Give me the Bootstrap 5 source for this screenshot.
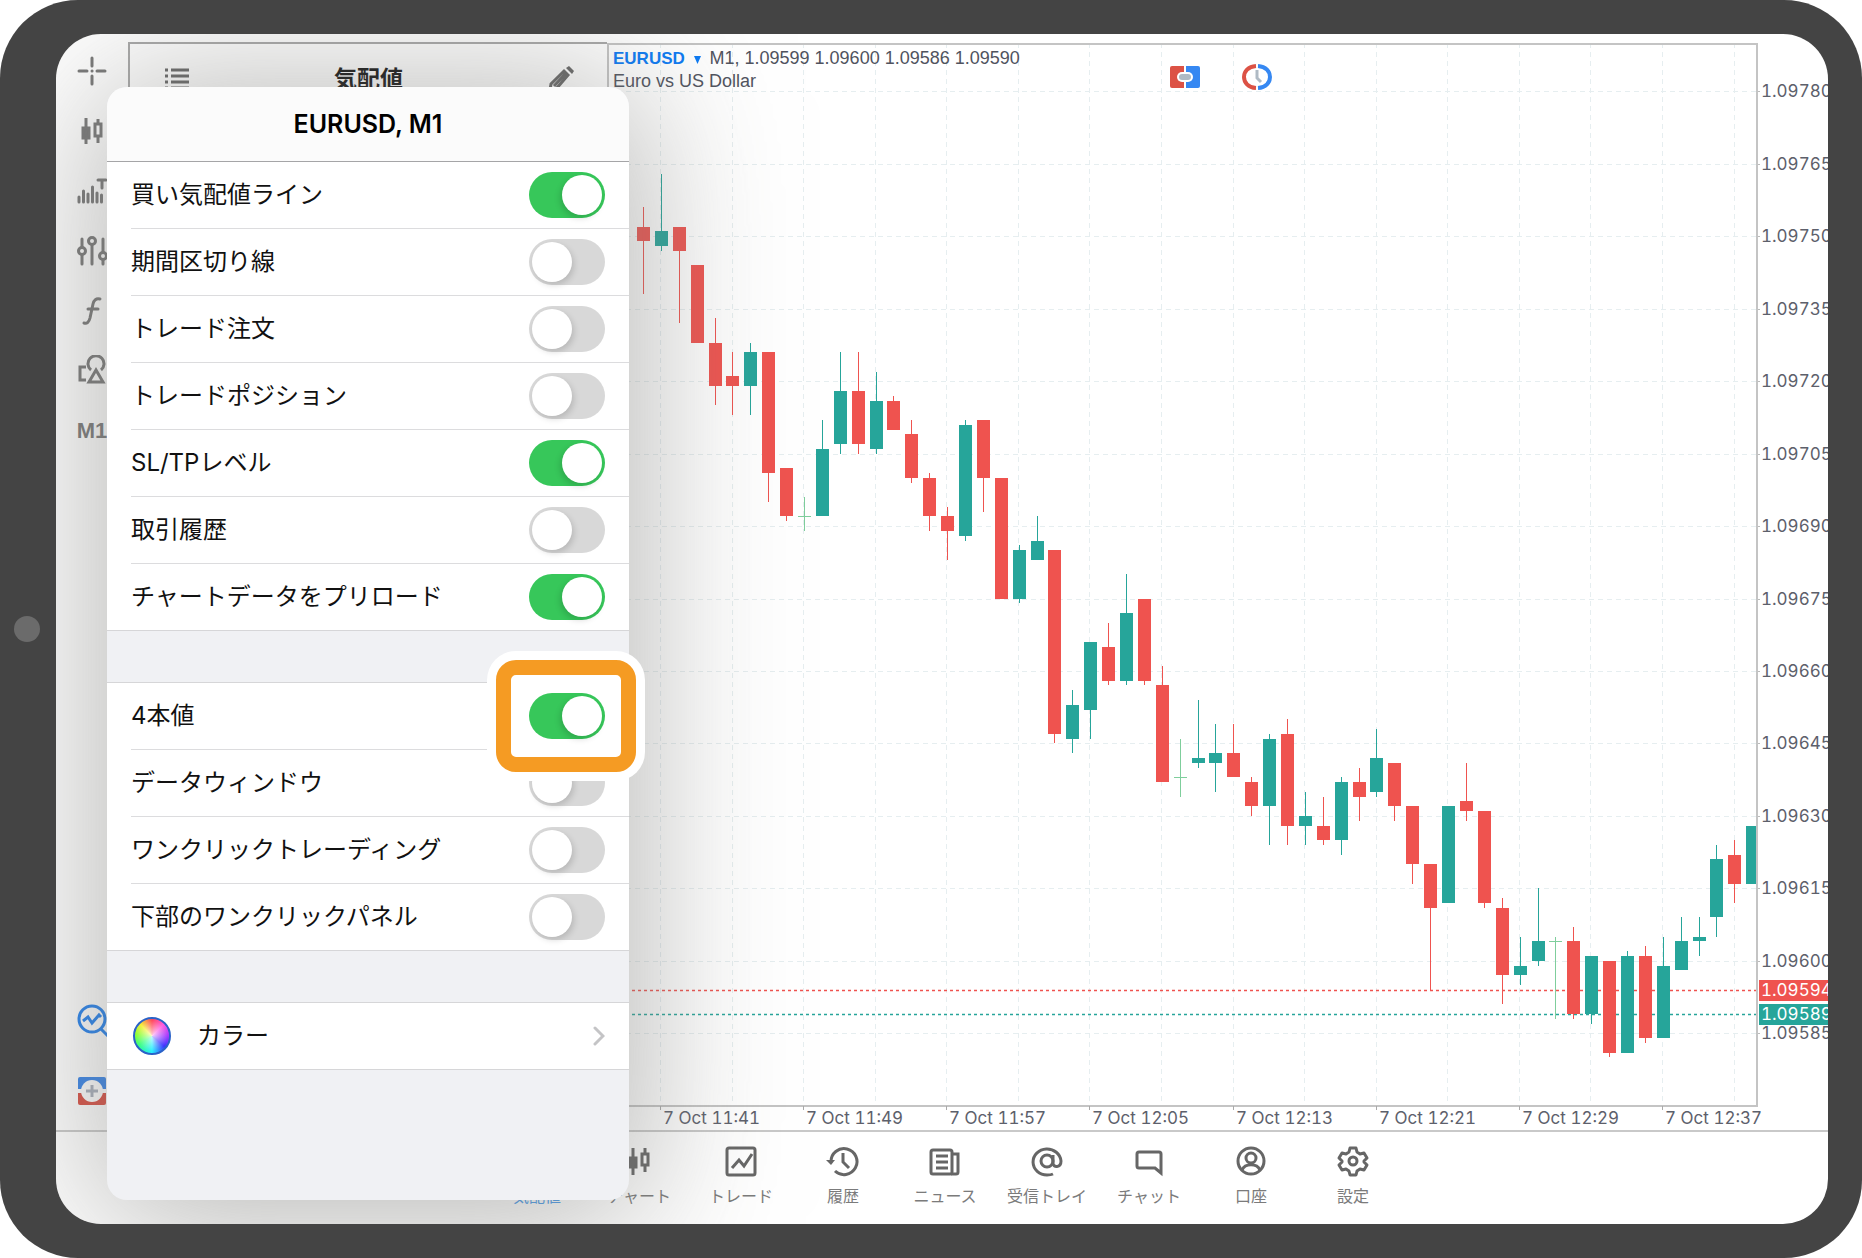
<!DOCTYPE html>
<html lang="ja">
<head>
<meta charset="utf-8">
<meta name="viewport" content="width=device-width, initial-scale=1">
<title>EURUSD, M1</title>
<link href="https://cdn.jsdelivr.net/npm/bootstrap@5.3.0/dist/css/bootstrap.min.css" rel="stylesheet">
<style>
  body { background: #fff; font-family: Inter, "Noto Sans CJK JP", sans-serif; color: #000; }
  .device { height: 100vh; min-height: 1100px; background: #444; border-radius: 78px; padding: 34px 34px 34px 0; }
  .bezel { width: 56px; padding-right: 2px; }
  .lens { width: 26px; height: 26px; border-radius: 50%; background: #6b6b6b; }
  .screen { border-radius: 45px; background: #fff; min-width: 0; }
  .upper { min-height: 0; }
  svg { display: block; }
  .ico { fill: none; stroke: #666; stroke-width: 3; }

  .tools { width: 72px; padding: 7px 0 4px; }
  .tool { height: 60px; border: 0; background: none; padding: 0; display: flex; align-items: center; justify-content: center; color: #666; }
  .tools .ico { stroke: #777; }
  .tool-low { height: 71px; }
  .tool-period { font: bold 22px/30px "Liberation Sans", sans-serif; color: #777; }

  .quotes { width: 479px; margin-top: 8px; border: solid #a8a8a8; border-width: 2px 0 0 2px; }
  .quotes-head { height: 70px; padding: 0 32px 0 34px; }
  .quotes-head h2 { font-size: 23px; line-height: 32px; font-weight: 700; margin: 0; color: #111; }
  .plain { border: 0; background: none; padding: 0; }

  .chart-area { min-width: 0; }
  .chart-area > svg { width: 100%; height: 100%; }
  .chart-label { left: 6px; top: 13px; font: 18px/23px "Liberation Sans", sans-serif; color: #50535e; }
  .symbol { color: #0a7af5; font: bold 17px/23px "Liberation Sans", sans-serif; }
  .chart-tools { left: 563px; top: 30px; gap: 42px; }
  .axis-text { font: 17px Inter, sans-serif; font-variant-numeric: tabular-nums; fill: #5d606b; }
  .axis-flag { fill: #fff; }

  .tabs { height: 94px; border-top: 2px solid #c9c9c9; padding: 12px 0 0 6px; }
  .tab-link { width: 102px; color: #7b7b7b; text-decoration: none; font-size: 16px; line-height: 24px; white-space: nowrap; }
  .tab-link .ico { margin-bottom: 6px; }
  .tab-link.current { color: #4b9bea; }
  .tab-link.current .ico { stroke: #4b9bea; }

  .sheet { left: 51px; top: 53px; bottom: 24px; width: 522px; border-radius: 20px; background: #f0f1f4; box-shadow: 0 10px 150px 12px rgba(125,125,122,.56); z-index: 5; }
  .sheet-head { height: 75px; border-bottom: 1px solid #a5a5a7; border-radius: 20px 20px 0 0; background: #fbfbfb; }
  .sheet-head h1 { font-size: 25px; line-height: 32px; font-weight: 600; margin: 0; }
  .group { background: #fff; border-bottom: 1px solid #d6d6d8; }
  .group + .group { margin-top: 51px; border-top: 1px solid #d6d6d8; }
  .item { height: 67px; margin-left: 24px; padding-right: 24px; border-bottom: 1px solid #dcdcde; font-size: 24px; line-height: 34px; color: #111; }
  .item:last-child { height: 66px; border-bottom: 0; }
  .item label { flex: 1; }
  .switch { appearance: none; width: 76px; height: 46px; border-radius: 23px; background: #d8d8d8; margin: 0; padding: 3px; position: relative; }
  .switch::before { content: ""; display: block; width: 40px; height: 40px; border-radius: 50%; background: #fff; box-shadow: 2px 3px 6px rgba(0,0,0,.15); }
  .switch:checked { background: #37c75a; }
  .switch:checked::before { margin-left: 30px; box-shadow: -2px 3px 6px rgba(0,0,0,.15); }
  .spot { position: relative; }
  .spot::before { content: ""; position: absolute; inset: -33px -31px -33px -33px; border: 15px solid #f59b23; border-radius: 20px; background: #fff; box-shadow: 0 0 0 9px #fff; z-index: 2; }
  .spot .switch { z-index: 3; display: block; }
  .wheel { width: 38px; height: 38px; border-radius: 50%; border: 2px solid #2a62c8; margin-right: 26px; margin-left: 2px;
    background: radial-gradient(circle, rgba(255,255,255,.75), rgba(255,255,255,0) 65%), conic-gradient(#ff4a5c, #ff5ce0 45deg, #a43cff 90deg, #3a36ff 130deg, #28f0ff 180deg, #38ff80 235deg, #8dff38 275deg, #f5f03a 315deg, #ff4a5c 360deg); }
  .item a { color: inherit; text-decoration: none; }
</style>
<script src="https://cdn.jsdelivr.net/npm/bootstrap@5.3.0/dist/js/bootstrap.bundle.min.js"></script>
</head>
<body>
<div class="device d-flex">
  <div class="bezel d-flex align-items-center justify-content-center flex-shrink-0"><span class="lens"></span></div>

  <div class="screen position-relative overflow-hidden flex-grow-1 d-flex flex-column">
    <main class="upper d-flex flex-grow-1">
      <div class="tools d-flex flex-column flex-shrink-0">
        <button class="tool" aria-label="十字線"><svg class="ico" width="32" height="32" viewBox="0 0 32 32" stroke-linecap="round"><path d="M16 3v8M16 21v8M3 16h8M21 16h8M16 16h.1"/></svg></button>
        <button class="tool" aria-label="チャートタイプ"><svg class="ico" width="32" height="32" viewBox="0 0 32 32"><path d="M10 3v26M22 4v6M22 21v7"/><path d="M7 13h6v10H7z" fill="#777"/><path d="M19 9h6v12h-6z"/></svg></button>
        <button class="tool" aria-label="出来高"><svg class="ico" width="32" height="32" viewBox="0 0 32 32" stroke-linecap="round"><path d="M3 22v5M7.500 16v11M12 19v8M16.500 12v15M21 18v9M25.500 20v7M26 6v7M22 5h8"/></svg></button>
        <button class="tool" aria-label="調整"><svg class="ico" width="32" height="32" viewBox="0 0 32 32" stroke-linecap="round"><path d="M6 4v8M6 20v9M16 10v19M27 4v13M27 25v4"/><circle cx="6" cy="16" r="3.500"/><circle cx="16" cy="6" r="3.500"/><circle cx="27" cy="21" r="3.500"/></svg></button>
        <button class="tool" aria-label="インディケータ"><svg class="ico" width="32" height="32" viewBox="0 0 32 32" stroke-linecap="round"><path d="M24 4c-4-1-6 1-7 5l-3 14c-1 4-3 6-6 5M12 14h10"/></svg></button>
        <button class="tool" aria-label="オブジェクト"><svg class="ico" width="32" height="32" viewBox="0 0 32 32"><path d="M10 12H4v13h6M20 15l-7 12h14z"/><path d="M15 15a8 8 0 1 1 10 0"/></svg></button>
        <button class="tool tool-period">M1</button>
        <button class="tool tool-low mt-auto" aria-label="検索"><svg width="32" height="38" viewBox="0 0 32 38" fill="none" stroke="#1f7ff0" stroke-width="3"><circle cx="16" cy="18" r="13"/><path d="M25 28l7 7M7 20l5-4 4 6 7-8 2 2"/></svg></button>
        <button class="tool tool-low" aria-label="新規注文"><svg width="28" height="28" viewBox="0 0 28 28"><path d="M2 0h24q2 0 2 2v10H0V2q0-2 2-2z" fill="#3583ea"/><path d="M0 16h28v10q0 2-2 2H2q-2 0-2-2z" fill="#d94c40"/><circle cx="14" cy="14" r="11" fill="#fff"/><path d="M14 8v12M8 14h12" stroke="#a9b0bc" stroke-width="3"/></svg></button>
      </div>

      <section class="quotes flex-shrink-0">
        <div class="quotes-head d-flex align-items-center justify-content-between">
          <button class="plain" aria-label="一覧"><svg width="26" height="24" viewBox="0 0 26 24" fill="none" stroke="#666" stroke-width="3"><path d="M1 3h3M7 3h18M1 9h3M7 9h18M1 15h3M7 15h18M1 21h3M7 21h18"/></svg></button>
          <h2>気配値</h2>
          <button class="plain" aria-label="編集"><svg width="28" height="28" viewBox="0 0 28 28" fill="none" stroke="#666" stroke-width="3"><path d="M3 25l1-6L17 6l4 4L9 24zM20 7L7 21"/><path d="M19 3l3-2 5 5-2 3z" fill="#666" stroke="none"/></svg></button>
        </div>
      </section>

      <section class="chart-area position-relative flex-grow-1">
        <svg id="chart" role="img" aria-label="EURUSD M1"></svg>
        <div class="chart-label position-absolute">
          <div><button class="plain symbol">EURUSD <svg class="d-inline-block mx-1" width="7" height="8" viewBox="0 0 7 8"><path d="M0 0h7L3.500 8z" fill="#0a7af5"/></svg></button> M1, 1.09599 1.09600 1.09586 1.09590</div>
          <div>Euro vs US Dollar</div>
        </div>
        <div class="chart-tools position-absolute d-flex align-items-center">
          <button class="plain" aria-label="ワンクリック"><svg width="30" height="22" viewBox="0 0 30 22"><path d="M2 0h12v22H2q-2 0-2-2V2q0-2 2-2z" fill="#dc5245"/><path d="M16 0h12q2 0 2 2v18q0 2-2 2H16z" fill="#3688f2"/><rect x="7" y="6" width="16" height="10" rx="5" fill="#fff"/><rect x="9" y="8" width="12" height="6" rx="3" fill="#afbac4"/></svg></button>
          <button class="plain" aria-label="時間"><svg width="30" height="26" viewBox="0 0 30 26" fill="none"><path d="M14 2C-2 3-2 23 14 24" stroke="#dc5245" stroke-width="4"/><path d="M16 2c16 1 16 21 0 22" stroke="#3688f2" stroke-width="4"/><path d="M15 6v8l4 4" stroke="#afbac4" stroke-width="3"/></svg></button>
        </div>
      </section>
    </main>

    <nav class="tabs d-flex justify-content-center flex-shrink-0">
      <a href="#" class="tab-link current d-flex flex-column align-items-center"><svg class="ico" width="34" height="34" viewBox="0 0 34 34"><path d="M11 29V7M5 13l6-6 6 6M23 5v22M17 21l6 6 6-6"/></svg>気配値</a>
      <a href="#" class="tab-link d-flex flex-column align-items-center"><svg class="ico" width="34" height="34" viewBox="0 0 34 34"><path d="M11 4v27M23 4v6M23 21v7"/><path d="M8 14h6v9H8z" fill="#666"/><path d="M20 10h6v11h-6z"/></svg>チャート</a>
      <a href="#" class="tab-link d-flex flex-column align-items-center"><svg class="ico" width="34" height="34" viewBox="0 0 34 34"><rect x="3" y="4" width="28" height="27" rx="2"/><path d="M8 24l7-8 5 6 8-12"/></svg>トレード</a>
      <a href="#" class="tab-link d-flex flex-column align-items-center"><svg class="ico" width="34" height="34" viewBox="0 0 34 34"><path d="M5 18A13 13 0 1 1 9 27M17 9v9l6 6"/><path d="M0 16h9l-4 5z" fill="#666" stroke="none"/></svg>履歴</a>
      <a href="#" class="tab-link d-flex flex-column align-items-center"><svg class="ico" width="34" height="34" viewBox="0 0 34 34"><rect x="3" y="6" width="21" height="24" rx="2"/><path d="M24 10h6v18q0 2-2 2h-5M8 12h12M8 18h12M8 24h12"/></svg>ニュース</a>
      <a href="#" class="tab-link d-flex flex-column align-items-center"><svg class="ico" width="34" height="34" viewBox="0 0 34 34"><circle cx="17" cy="17" r="6"/><path d="M23 11v8c0 5 8 5 8-2a14 13 0 1 0-14 14q4 0 6-1"/></svg>受信トレイ</a>
      <a href="#" class="tab-link d-flex flex-column align-items-center"><svg class="ico" width="34" height="34" viewBox="0 0 34 34"><path d="M7 8h20q2 0 2 2v19l-6-5H7q-2 0-2-2V10q0-2 2-2z"/></svg>チャット</a>
      <a href="#" class="tab-link d-flex flex-column align-items-center"><svg class="ico" width="34" height="34" viewBox="0 0 34 34"><circle cx="17" cy="17" r="13"/><circle cx="17" cy="14" r="5"/><path d="M8 26c3-7 15-7 18 0"/></svg>口座</a>
      <a href="#" class="tab-link d-flex flex-column align-items-center"><svg class="ico" width="34" height="34" viewBox="0 0 34 34" stroke-linejoin="round"><path d="M14 4h6l1 4 3 2 4-1 3 5-3 3 0 1 3 3-3 5-4-1-3 2-1 4h-6l-1-4-3-2-4 1-3-5 3-3v-1l-3-3 3-5 4 1 3-2z"/><circle cx="17" cy="17" r="4"/></svg>設定</a>
    </nav>

    <div class="sheet position-absolute">
      <div class="sheet-head d-flex align-items-center justify-content-center"><h1>EURUSD, M1</h1></div>
      <div class="group">
        <div class="item d-flex align-items-center"><label for="s1">買い気配値ライン</label><input class="switch" type="checkbox" role="switch" id="s1" checked></div>
        <div class="item d-flex align-items-center"><label for="s2">期間区切り線</label><input class="switch" type="checkbox" role="switch" id="s2"></div>
        <div class="item d-flex align-items-center"><label for="s3">トレード注文</label><input class="switch" type="checkbox" role="switch" id="s3"></div>
        <div class="item d-flex align-items-center"><label for="s4">トレードポジション</label><input class="switch" type="checkbox" role="switch" id="s4"></div>
        <div class="item d-flex align-items-center"><label for="s5">SL/TPレベル</label><input class="switch" type="checkbox" role="switch" id="s5" checked></div>
        <div class="item d-flex align-items-center"><label for="s6">取引履歴</label><input class="switch" type="checkbox" role="switch" id="s6"></div>
        <div class="item d-flex align-items-center"><label for="s7">チャートデータをプリロード</label><input class="switch" type="checkbox" role="switch" id="s7" checked></div>
      </div>
      <div class="group">
        <div class="item d-flex align-items-center"><label for="s8">4本値</label><span class="spot"><input class="switch" type="checkbox" role="switch" id="s8" checked></span></div>
        <div class="item d-flex align-items-center"><label for="s9">データウィンドウ</label><input class="switch" type="checkbox" role="switch" id="s9"></div>
        <div class="item d-flex align-items-center"><label for="s10">ワンクリックトレーディング</label><input class="switch" type="checkbox" role="switch" id="s10"></div>
        <div class="item d-flex align-items-center"><label for="s11">下部のワンクリックパネル</label><input class="switch" type="checkbox" role="switch" id="s11"></div>
      </div>
      <div class="group">
        <div class="item"><a href="#" class="d-flex align-items-center h-100"><span class="wheel"></span><span class="flex-grow-1">カラー</span><svg width="13" height="20" viewBox="0 0 13 20" fill="none" stroke="#c4c4c6" stroke-width="3" stroke-linecap="round"><path d="M3 2l8 8-8 8"/></svg></a></div>
      </div>
    </div>
  </div>
</div>

<script>
  // Each candle: direction (u up, d down, x unchanged), then high, body top, body bottom, low in points under 1.09780
  const candles = `d24,28,31,42 u17,29,32,33 d28,28,33,48 d36,36,52,52 d47,52,61,65 d54,59,61,67 u52,54,61,67 d54,54,79,85
    d78,78,88,89 x84,88,88,91 u68,74,88,88 u54,62,73,75 d54,62,73,75 u58,64,74,75 d63,64,70,70 d68,71,80,81 d79,80,88,91
    d86,88,91,97 u68,69,92,93 d68,68,80,87 d80,80,105,105 u94,95,105,106 u88,93,97,97 d95,95,133,135 u124,127,134,137
    u114,114,128,134 d110,115,122,123 u100,108,122,123 d105,105,122,123 d119,123,143,143 x134,142,142,146 u126,138,139,140
    u131,137,139,145 d131,137,142,142 d142,143,148,150 u133,134,148,156 d130,133,152,156 u145,150,152,156 d146,152,155,156
    u142,143,155,158 d140,143,146,151 u132,138,145,146 d139,139,148,151 d148,148,160,164 d160,160,169,186 u148,148,168,168
    d139,147,149,151 d149,149,168,169 d167,169,183,189 u175,181,183,185 u165,176,180,181 x175,176,176,192 d173,176,191,192
    u179,179,191,193 d180,180,199,200 u178,179,199,199 d177,179,196,197 u175,181,196,196 u171,176,182,182 u171,175,176,179
    u156,159,171,175 d155,158,164,168 u152,152,164,164`.split(/\s+/);
  const svg = document.getElementById('chart');
  const color = { u: '#26a59a', d: '#ef534f', x: '#7fce9c' };

  function draw() {
    const w = svg.clientWidth, h = svg.clientHeight;
    const left = 1, top = 9, right = w - 71, bottom = h - 24;
    const y = p => Math.round(57.4 + p * 4.83);
    const x = i => Math.round(36 + i * 17.89);
    let out = '';
    for (let i = 0; 53 + i * 71.57 < right; i++) {
      const gx = Math.round(53 + i * 71.57);
      out += `<path d="M${gx + .5} ${top}V${bottom}" stroke="#e6eef0" stroke-dasharray="5 4"/>`;
    }
    for (let p = 0; y(p) < bottom - 20; p += 15)
      out += `<path d="M${left} ${y(p) + .5}H${right}" stroke="#e6eef0" stroke-dasharray="5 4"/><path d="M${right} ${y(p) + .5}h3" stroke="#bbb"/>
        <text class="axis-text" x="${right + 4}" y="${y(p) + 6}">${(1.0978 - p / 1e5).toFixed(5)}</text>`;
    for (const [p, c] of [[186, color.d], [191, color.u]])
      out += `<path d="M${left} ${y(p) + .5}H${right}" stroke="${c}" stroke-width="1.500" stroke-dasharray="3 3"/>
        <rect x="${right + 2}" y="${y(p) - 10}" width="80" height="21" fill="${c}"/>
        <text class="axis-text axis-flag" x="${right + 4}" y="${y(p) + 6}">${(1.0978 - p / 1e5).toFixed(5)}</text>`;
    out += `<clipPath id="plot"><rect x="${left}" y="${top}" width="${right - left}" height="${bottom - top}"/></clipPath><g clip-path="url(#plot)">`;
    candles.forEach((s, i) => {
      const c = color[s[0]], [hi, a, b, lo] = s.slice(1).split(',').map(Number);
      out += `<path d="M${x(i) + .5} ${y(hi)}V${y(lo)}" stroke="${c}"/>
        <rect x="${x(i) - 6}" y="${y(a)}" width="13" height="${Math.max(1, y(b) - y(a))}" fill="${c}"/>`;
    });
    out += `</g><path d="M${left} ${bottom}V${top + 1}H${right}V${bottom}z" fill="none" stroke="#c4c4c4" stroke-width="2"/>`;
    ['11:41', '11:49', '11:57', '12:05', '12:13', '12:21', '12:29', '12:37'].forEach((t, i) => {
      const tx = Math.round(53 + i * 143.14);
      out += `<path d="M${tx + .5} ${bottom}v4" stroke="#aaa"/><text class="axis-text" x="${tx + 3}" y="${bottom + 18}">7 Oct ${t}</text>`;
    });
    svg.innerHTML = out;
  }
  draw();
  addEventListener('resize', draw);
</script>
</body>
</html>
